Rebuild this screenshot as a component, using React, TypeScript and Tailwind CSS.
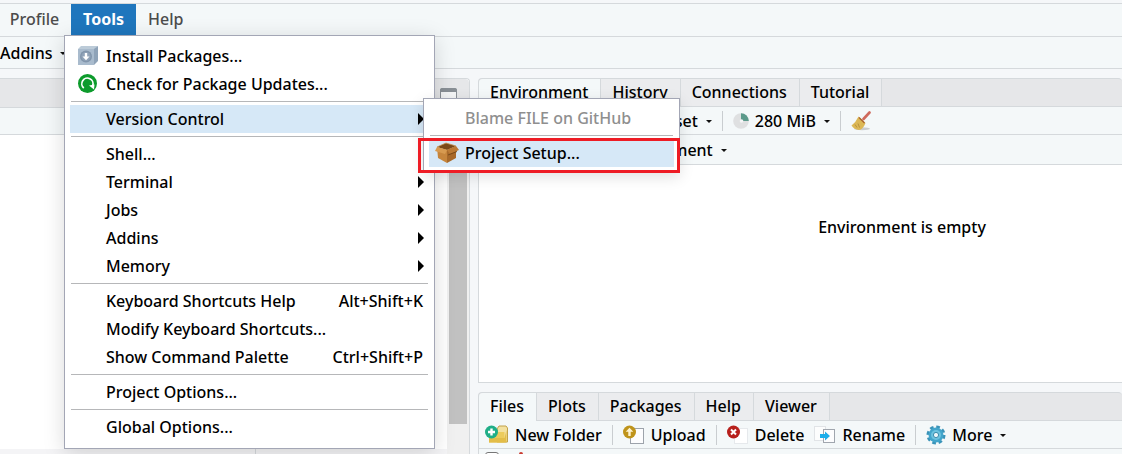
import React from "react";

type Item = { label: string; icon?: React.ReactNode; shortcut?: string; sub?: boolean };

function InstallIcon() {
  return (
    <svg width="20" height="20" viewBox="0 0 20 20">
      <path d="M0 3 L3 0 H20 L17 3 Z" fill="#bccbd8" />
      <path d="M16 3 L20 0 V15 L16 19 Z" fill="#8fa3b8" />
      <rect x="0" y="3" width="16" height="16" fill="#a9bbcd" />
      <circle cx="8" cy="10.500" r="6" fill="#8195ab" />
      <circle cx="8" cy="10.500" r="4.600" fill="#90a3b8" />
      <path d="M6.800 7h2.400v3.500h2.300L8 14.300 4.500 10.500h2.300Z" fill="#fff" />
    </svg>
  );
}

function UpdateIcon() {
  return (
    <svg width="20" height="20" viewBox="0 0 20 20">
      <circle cx="9.500" cy="9.500" r="9.500" fill="#0d9b2c" />
      <path d="M5.800 14A5.600 5.600 0 1 1 14.700 11.500" fill="none" stroke="#fff" strokeWidth="1.700" />
      <path d="M11 11.500l5.500-1-.5 5Z" fill="#fff" />
    </svg>
  );
}

function BoxIcon() {
  return (
    <svg width="24" height="22" viewBox="0 0 24 22">
      <path d="M2 5 L11 1 L21 4 L12 8 Z" fill="#7a4a19" />
      <path d="M2 5 L12 8 V21 L3 16 Z" fill="#c6853c" />
      <path d="M12 8 L21 4 V16 L12 21 Z" fill="#a8692a" />
      <path d="M2 5 L0 9 L10 12 L12 8 Z" fill="#d79a50" />
      <path d="M12 8 L21 4 L24 8 L15 12 Z" fill="#bb7a35" />
      <path d="M13 13 L22 9.500" stroke="#7a4a19" strokeWidth="1" />
      <path d="M2 5 L11 1 L21 4" fill="none" stroke="#c99453" strokeWidth=".8" />
    </svg>
  );
}

function PieIcon() {
  return (
    <svg width="16" height="16" viewBox="0 0 16 16">
      <circle cx="8" cy="8" r="7.800" fill="#dfe0e1" />
      <path d="M8 8V.2A7.800 7.800 0 0 1 15.800 8Z" fill="#5c9a8b" />
      <circle cx="8.500" cy="8" r="1.800" fill="#f4f5f6" />
    </svg>
  );
}

function BroomIcon() {
  return (
    <svg width="20" height="20" viewBox="0 0 20 20">
      <ellipse cx="11" cy="17.800" rx="8" ry="1.500" fill="#c9cccf" />
      <path d="M12.500 8L18.500 1.500" stroke="#cf6a5d" strokeWidth="2.600" strokeLinecap="round" />
      <path d="M7.500 5.500L14.500 12 Q12 18.500 8 19 Q3 18.500 .5 14.500 Q5 11 7.500 5.500Z" fill="#dcb856" />
      <path d="M4 13.500l2 3M7 12.500l1.500 4" stroke="#b8933c" strokeWidth="1" />
      <path d="M8 6.500l5.500 5.500" stroke="#a8612f" strokeWidth="1.200" />
    </svg>
  );
}

function FolderIcon() {
  return (
    <svg width="24" height="20" viewBox="0 0 24 20">
      <path d="M12 4l2-3h7l1.500 2v14H12Z" fill="#f3e1a0" stroke="#c2a24a" />
      <path d="M4 7h15.500v10.500H4Z" fill="#eccb5c" />
      <path d="M4 13h15.500l2-8v12.500H4Z" fill="#e3bd48" />
      <circle cx="6.500" cy="7" r="6.500" fill="#1fae87" />
      <path d="M6.500 3.500v7M3 7h7" stroke="#fff" strokeWidth="2.400" />
    </svg>
  );
}

function UploadIcon() {
  return (
    <svg width="22" height="20" viewBox="0 0 22 20">
      <rect x="7.500" y="3.500" width="13" height="15" fill="#fdfdfe" stroke="#9da3ab" />
      <circle cx="6.500" cy="7" r="6.500" fill="#bf941b" />
      <path d="M6.500 2.800l3.800 4H7.700V11H5.300V6.800H2.700Z" fill="#fff3cf" />
    </svg>
  );
}

function DeleteIcon() {
  return (
    <svg width="22" height="20" viewBox="0 0 22 20">
      <rect x="7.500" y="3.500" width="13" height="15" fill="#fff" stroke="#e6e9ec" />
      <circle cx="6.500" cy="7" r="6.500" fill="#b7201c" />
      <path d="M4 4.500l5 5M9 4.500l-5 5" stroke="#fff" strokeWidth="2" />
    </svg>
  );
}

function RenameIcon() {
  return (
    <svg width="22" height="18" viewBox="0 0 22 18">
      <rect x=".5" y=".5" width="11" height="14" fill="#fcfdfd" stroke="#e1e4e7" />
      <rect x="9.500" y="3.500" width="11" height="13" fill="#fdfdfe" stroke="#a0a6ae" />
      <path d="M6 8h5V5.500l5 4.500-5 4.500V12H6Z" fill="#1daeea" />
    </svg>
  );
}

function GearIcon() {
  return (
    <svg width="20" height="20" viewBox="0 0 20 20">
      <circle cx="10" cy="10" r="8" fill="none" stroke="#3a93b8" strokeWidth="3" strokeDasharray="3.600 2.683" />
      <circle cx="10" cy="10" r="7.500" fill="#42a5cb" />
      <circle cx="10" cy="10" r="5" fill="#6cc3df" />
      <circle cx="10" cy="10" r="2.600" fill="#eef7fa" stroke="#3b8dae" />
    </svg>
  );
}

function Caret() {
  return (
    <svg width="6" height="3" viewBox="0 0 6 3">
      <path d="M0 0h6L3 3Z" fill="#111" />
    </svg>
  );
}

function Rule() {
  return <span className="h-5 w-px bg-[#c9cdd0]" />;
}

function Separator() {
  return <div className="mx-px my-[3px] h-px bg-[#b6b7b9]" role="separator" />;
}

function MenuItem({ item, active, disabled }: { item: Item; active?: boolean; disabled?: boolean }) {
  return (
    <button
      type="button"
      disabled={disabled}
      className={`flex h-7 w-full items-center text-left whitespace-nowrap ${active ? "bg-[#d6e8f7]" : ""} ${disabled ? "text-[#8f8f8f]" : "text-black"}`}
    >
      <span className="flex w-9 shrink-0 justify-center">{item.icon}</span>
      <span className="grow">{item.label}</span>
      {item.shortcut && <span className="pr-1">{item.shortcut}</span>}
      {item.sub && (
        <svg className="mr-[3px]" width="6" height="12" viewBox="0 0 6 12">
          <path d="M0 0L6 6 0 12Z" fill="#000" />
        </svg>
      )}
    </button>
  );
}

const groups: Item[][] = [
  [
    { label: "Install Packages...", icon: <InstallIcon /> },
    { label: "Check for Package Updates...", icon: <UpdateIcon /> },
  ],
  [{ label: "Version Control", sub: true }],
  [
    { label: "Shell..." },
    { label: "Terminal", sub: true },
    { label: "Jobs", sub: true },
    { label: "Addins", sub: true },
    { label: "Memory", sub: true },
  ],
  [
    { label: "Keyboard Shortcuts Help", shortcut: "Alt+Shift+K" },
    { label: "Modify Keyboard Shortcuts..." },
    { label: "Show Command Palette", shortcut: "Ctrl+Shift+P" },
  ],
  [{ label: "Project Options..." }],
  [{ label: "Global Options..." }],
];

function VersionMenu() {
  return (
    <div className="absolute -top-[7px] left-[353px] z-20 w-[257px] border border-[#a3a6b5] bg-white p-[5px] shadow-[0_4px_14px_rgba(0,0,0,0.12)]">
      <MenuItem item={{ label: "Blame FILE on GitHub" }} disabled />
      <Separator />
      <MenuItem item={{ label: "Project Setup...", icon: <BoxIcon /> }} active />
      <div className="pointer-events-none absolute -right-px -bottom-px -left-1.5 h-[35px] border-3 border-[#ee1c25]" />
    </div>
  );
}

function ToolsMenu() {
  return (
    <div className="absolute top-[31px] -left-[7px] z-10 w-[371px] border border-[#a3a6b5] bg-white px-[5px] pt-1.5 pb-[7px] font-medium text-black shadow-[0_4px_20px_rgba(0,0,0,0.15)]">
      {groups.map((group, g) => (
        <React.Fragment key={g}>
          {g > 0 && <Separator />}
          {group.map((item) => (
            <div key={item.label} className="relative pr-0.5">
              <MenuItem item={item} active={item.label === "Version Control"} />
              {item.label === "Version Control" && <VersionMenu />}
            </div>
          ))}
        </React.Fragment>
      ))}
    </div>
  );
}

function Tabs({ names }: { names: string[] }) {
  return (
    <div className="flex h-[29px] shrink-0 rounded-t border-t border-l border-[#d5d9dc] bg-[#e6e7e9]" role="tablist">
      {names.map((name, i) => (
        <button
          key={name}
          type="button"
          role="tab"
          aria-selected={i === 0}
          className={`border-r border-[#d5d9dc] pr-3 pb-0.5 pl-[11px] ${i === 0 ? "rounded-tl bg-[#f4f8f9]" : "border-b bg-[#ebecee]"}`}
        >
          {name}
        </button>
      ))}
      <div className="grow border-b border-[#d5d9dc]" />
    </div>
  );
}

function Tool({ icon, label, caret }: { icon?: React.ReactNode; label: string; caret?: boolean }) {
  return (
    <button type="button" className="flex items-center gap-1.5 whitespace-nowrap">
      {icon}
      <span>{label}</span>
      {caret && <span className="ml-0.5 flex pt-0.5"><Caret /></span>}
    </button>
  );
}

export default function App() {
  return (
    <div className="flex h-screen min-w-[1000px] flex-col overflow-hidden bg-[#f5f7f9] font-['Noto_Sans','Open_Sans',sans-serif] text-base leading-5 font-medium text-black">
      <nav className="mt-[3px] flex h-[34px] shrink-0 border-y border-[#d5d9dc] bg-[#f4f8f9] text-[#4c4c4c]">
        <button type="button" className="w-[71px] pr-0.5 pb-0.5">Profile</button>
        <div className="relative">
          <button type="button" className="h-[31px] w-[65px] bg-[#1f76bd] pb-0.5 font-bold text-white">Tools</button>
          <ToolsMenu />
        </div>
        <button type="button" className="px-3 pb-0.5">Help</button>
      </nav>
      <div className="flex h-8 shrink-0 items-center border-b border-[#d5d9dc] bg-[#f4f8f9]">
        <Tool label="Addins" caret />
      </div>
      <main className="mt-[9px] flex min-h-0 grow gap-2">
        <section className="flex w-[470px] shrink-0 flex-col rounded-tr border-t border-r border-[#d5d9dc] bg-white">
          <div className="flex h-[29px] shrink-0 items-center justify-end rounded-tr border-b border-[#d5d9dc] bg-[#e6e7e9] pt-1 pr-3">
            <svg width="17" height="14" viewBox="0 0 17 14">
              <rect x=".5" y=".5" width="16" height="13" rx="2" fill="#f5f6f7" stroke="#8a9096" />
              <path d="M0 4V2a2 2 0 0 1 2-2h13a2 2 0 0 1 2 2v2Z" fill="#8a9096" />
            </svg>
          </div>
          <div className="h-[27px] shrink-0 border-b border-[#d5d9dc] bg-[#f4f8f9]" />
          <div className="flex min-h-0 grow">
            <div className="flex grow flex-col justify-end">
              <div className="flex h-[5px] bg-[#f4f4f6]">
                <div className="w-64 border-r border-[#d5d9dc]" />
              </div>
            </div>
            <div className="w-[22px] bg-[#f0f0f0] px-0.5 pb-[30px]">
              <div className="h-full bg-[#c1c1c1]" />
            </div>
          </div>
        </section>
        <div className="flex min-w-0 grow flex-col">
          <section className="flex h-[305px] shrink-0 flex-col border-b border-[#d5d9dc]">
            <Tabs names={["Environment", "History", "Connections", "Tutorial"]} />
            <div className="flex h-[28px] shrink-0 items-center gap-2.5 border-b border-l border-[#d5d9dc] bg-[#f4f8f9] pl-[102px]">
              <Tool label="Import Dataset" caret />
              <Rule />
              <Tool icon={<PieIcon />} label="280 MiB" caret />
              <Rule />
              <button type="button" aria-label="Clear objects"><BroomIcon /></button>
            </div>
            <div className="flex h-[30px] shrink-0 items-center border-b border-l border-[#d5d9dc] bg-[#f4f8f9] pl-[82px]">
              <Tool label="Global Environment" caret />
            </div>
            <div className="grow border-l border-[#d5d9dc] bg-white pt-[52px] pl-[203px] text-center">
              Environment is empty
            </div>
          </section>
          <section className="mt-[9px] flex grow flex-col">
            <Tabs names={["Files", "Plots", "Packages", "Help", "Viewer"]} />
            <div className="flex h-[28px] shrink-0 items-center gap-2.5 border-b border-l border-[#d5d9dc] bg-[#f4f8f9] pl-1.5">
              <Tool icon={<FolderIcon />} label="New Folder" />
              <Rule />
              <Tool icon={<UploadIcon />} label="Upload" />
              <Rule />
              <Tool icon={<DeleteIcon />} label="Delete" />
              <Tool icon={<RenameIcon />} label="Rename" />
              <Rule />
              <Tool icon={<GearIcon />} label="More" caret />
            </div>
            <div className="flex grow items-start gap-5 overflow-hidden border-l border-[#d5d9dc] bg-[#f4f8f9] pt-[3px] pl-1.5">
              <input type="checkbox" aria-label="Select all files" className="size-[14px] appearance-none rounded-[3px] border border-[#767676] bg-white" />
              <span className="size-1 rounded-full bg-[#c93a30]" />
            </div>
          </section>
        </div>
      </main>
    </div>
  );
}
